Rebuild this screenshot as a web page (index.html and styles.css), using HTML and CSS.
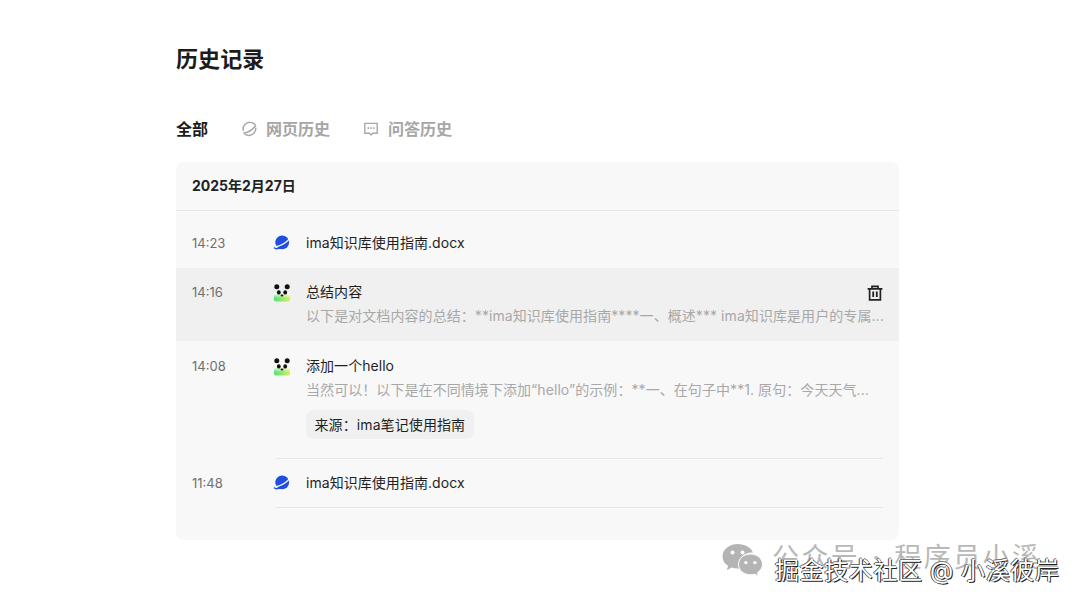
FILE: index.html
```html
<!DOCTYPE html>
<html lang="zh-CN">
<head>
<meta charset="utf-8">
<title>历史记录</title>
<link rel="stylesheet" href="styles.css">
</head>
<body>
<svg class="defs" width="0" height="0" aria-hidden="true">
  <defs>
    <linearGradient id="leaf" x1="0" y1="0" x2="1" y2="0">
      <stop offset="0" stop-color="#55e07a"/>
      <stop offset="1" stop-color="#d4f060"/>
    </linearGradient>
    <linearGradient id="fade" x1="0" y1="0" x2="0" y2="1">
      <stop offset="0" stop-color="#fff" stop-opacity="1"/>
      <stop offset="1" stop-color="#fff" stop-opacity="0"/>
    </linearGradient>
  </defs>
  <symbol id="planet" viewBox="0 0 16 16">
    <circle cx="8.200" cy="7.400" r="6.900" fill="#1f4fe0"/>
    <path d="M0.600 11.800C5 11.600 11.500 8.200 15.800 3.800" fill="none" stroke="#f8f8f8" stroke-width="1.400"/>
    <path d="M0.400 12.200C0 14.600 6 14 10 11.600" fill="none" stroke="#1f4fe0" stroke-width="1.300"/>
  </symbol>
  <symbol id="panda" viewBox="0 0 18 18">
    <rect x="1" y="9" width="16" height="8.500" rx="2" fill="url(#leaf)"/>
    <rect x="1" y="9" width="16" height="5" fill="url(#fade)"/>
    <circle cx="3.800" cy="2.800" r="2.500" fill="#111"/>
    <circle cx="14.200" cy="2.800" r="2.500" fill="#111"/>
    <ellipse cx="5.800" cy="8.400" rx="1.900" ry="2.200" fill="#111"/>
    <ellipse cx="12.200" cy="8.400" rx="1.900" ry="2.200" fill="#111"/>
    <ellipse cx="9" cy="11.400" rx="1.400" ry="1" fill="#111"/>
  </symbol>
</svg>

<main class="page">
  <h1 class="title">历史记录</h1>

  <nav class="tabs">
    <span class="tab tab-active">全部</span>
    <span class="tab">
      <svg class="tab-icon" viewBox="1 1 14 14" fill="none" stroke="#a8a8a8" stroke-width="1.300">
        <path d="M3 9.600C2 5.600 5.400 2 9 2.200C11.400 2.300 13 3.400 13.800 5"/>
        <path d="M13.900 6.800C14.400 10.600 11 14 7.400 13.700C6 13.600 4.800 13 4 12.200"/>
        <path d="M3 11.600C6.600 11.400 11 8.800 13.800 5.200"/>
      </svg>
      网页历史
    </span>
    <span class="tab">
      <svg class="tab-icon" viewBox="0 0 16 16" fill="none" stroke="#a8a8a8" stroke-width="1.400">
        <path d="M1.800 2.400H14.200V12.200H9.600L8 14L6.400 12.200H1.800Z" stroke-linejoin="miter"/>
        <path d="M4.500 7.200H6M7.250 7.200H8.750M10 7.200H11.500" stroke-width="1.800"/>
      </svg>
      问答历史
    </span>
  </nav>

  <section class="card">
    <header class="card-date">2025年2月27日</header>

    <article class="row row-first">
      <time class="time">14:23</time>
      <svg class="icon"><use href="#planet"/></svg>
      <div class="body">
        <div class="name">ima知识库使用指南.docx</div>
      </div>
    </article>

    <article class="row row-hover">
      <time class="time">14:16</time>
      <svg class="icon icon-panda"><use href="#panda"/></svg>
      <div class="body">
        <div class="name">总结内容</div>
        <p class="snippet">以下是对文档内容的总结：**ima知识库使用指南****一、概述*** ima知识库是用户的专属...</p>
      </div>
      <svg class="trash" viewBox="0 0 16 16" fill="none" stroke="#222" stroke-width="1.700">
        <path d="M0.600 3.800H15.400M5 3.600V1.400H11V3.600M2.600 3.800V14.800H13.400V3.800"/>
        <path d="M6.200 6.400V12M9.800 6.400V12" stroke-width="1.800"/>
      </svg>
    </article>

    <article class="row row-third">
      <time class="time">14:08</time>
      <svg class="icon icon-panda"><use href="#panda"/></svg>
      <div class="body body-ruled">
        <div class="name">添加一个hello</div>
        <p class="snippet">当然可以！以下是在不同情境下添加“hello”的示例：**一、在句子中**1. 原句：今天天气...</p>
        <span class="source">来源：ima笔记使用指南</span>
      </div>
    </article>

    <article class="row row-last">
      <time class="time">11:48</time>
      <svg class="icon"><use href="#planet"/></svg>
      <div class="body body-ruled">
        <div class="name">ima知识库使用指南.docx</div>
      </div>
    </article>
  </section>
</main>

<div class="watermark">
  <svg class="wechat" viewBox="0 0 40 34" fill="#b4b4b4">
    <path d="M15 0C6.700 0 0 5.600 0 12.400C0 16.400 2.200 19.600 5.600 21.900L4.200 26.200L9.200 23.600C11 24.100 13 24.500 15 24.500L16.600 24.400C16.200 23 15.900 21.800 15.900 20.600C15.900 13.900 22 8.600 29.400 8.600L30.400 8.600C28.800 3.600 22.600 0 15 0Z"/>
    <path d="M40 20.400C40 14.600 34.400 10 28 10C21.200 10 16 14.600 16 20.400C16 26.200 21.200 30.800 28 30.800C29.400 30.800 30.800 30.500 32.200 30.100L36 32.400L35 28.700C38 26.500 40 23.700 40 20.400Z" stroke="#fff" stroke-width="1"/>
    <circle cx="10" cy="8.400" r="2" fill="#fff"/>
    <circle cx="20" cy="8.400" r="2" fill="#fff"/>
    <circle cx="23.400" cy="18.600" r="1.700" fill="#fff"/>
    <circle cx="32.400" cy="18.600" r="1.700" fill="#fff"/>
  </svg>
  <span class="wm-gray">公众号 · 程序员小溪</span>
  <span class="wm-top">掘金技术社区 @ 小溪彼岸</span>
</div>
</body>
</html>
```

FILE: styles.css
```css
* {
  box-sizing: border-box;
}

html,
body {
  margin: 0;
  padding: 0;
  height: 605px;
  overflow: hidden;
  background: #fff;
}

body {
  position: relative;
  font-family: Inter, "Noto Sans CJK SC", sans-serif;
  color: #1f1f1f;
}

.defs {
  position: absolute;
}

.page {
  width: 723px;
  margin-left: 176px;
  padding-top: 45px;
}

.title {
  margin: 0;
  font-size: 22px;
  line-height: 28px;
  font-weight: 700;
  letter-spacing: 0.1px;
  color: #1c1c1c;
}

.tabs {
  display: flex;
  align-items: center;
  gap: 33px;
  margin-top: 44px;
  height: 24px;
}

.tab {
  display: flex;
  align-items: center;
  gap: 9px;
  font-size: 16px;
  line-height: 24px;
  font-weight: 700;
  color: #a6a6a6;
}

.tab-active {
  color: #1c1c1c;
}

.tab-icon {
  width: 16px;
  height: 16px;
}

.card {
  height: 378px;
  margin-top: 21px;
  border-radius: 8px;
  background: #f8f8f8;
}

.card-date {
  height: 49px;
  padding: 0 16px;
  border-bottom: 1px solid #e6e6e6;
  font-size: 14px;
  line-height: 47px;
  font-weight: 700;
  color: #222;
}

.row {
  display: flex;
  padding: 0 16px;
}

.row-first {
  height: 57px;
  padding-top: 22px;
}

.row-hover {
  height: 73px;
  padding-top: 14px;
  background: #f0f0f0;
}

.row-third {
  padding-top: 13px;
  margin-top: 2px;
}

.row-last {
  padding-top: 14px;
}

.time {
  flex: none;
  width: 82px;
  font-size: 13px;
  line-height: 20px;
  color: #6f6f6f;
}

.icon {
  flex: none;
  width: 16px;
  height: 16px;
  margin-top: 2px;
  margin-right: 16px;
}

.icon-panda {
  width: 18px;
  height: 18px;
  margin-top: 2px;
  margin-left: -1px;
  margin-right: 15px;
}

.body {
  flex: 1;
  min-width: 0;
}

.body-ruled {
  margin-left: -30px;
  padding-left: 30px;
  border-bottom: 1px solid #e8e8e8;
}

.row-third .body-ruled {
  height: 103px;
}

.row-last .body-ruled {
  height: 35px;
}

.name {
  font-size: 14px;
  line-height: 20px;
  letter-spacing: 0.05px;
  color: #1f1f1f;
}

.snippet {
  margin: 3px 0 0;
  font-size: 14px;
  line-height: 22px;
  letter-spacing: 0.07px;
  color: #a8a8a8;
  white-space: nowrap;
}

.source {
  display: block;
  width: fit-content;
  margin-top: 9px;
  padding: 0 8.500px;
  height: 29px;
  border-radius: 8px;
  background: #f0f0f0;
  font-size: 14px;
  line-height: 29px;
  letter-spacing: 0.1px;
  color: #1f1f1f;
}

.trash {
  position: absolute;
  width: 16px;
  height: 16px;
  left: 867px;
  top: 285px;
}

.watermark {
  position: absolute;
  left: 723px;
  top: 544px;
  width: 357px;
  height: 50px;
}

.wechat {
  position: absolute;
  left: -1px;
  top: 0;
  width: 41px;
  height: 34px;
}

.wm-gray {
  position: absolute;
  left: 49px;
  top: -2px;
  font-size: 27px;
  line-height: 32px;
  letter-spacing: 2.400px;
  word-spacing: 2px;
  white-space: nowrap;
  color: #b8b8b8;
}

.wm-top {
  position: absolute;
  left: 52px;
  top: 11px;
  font-size: 24px;
  line-height: 32px;
  letter-spacing: 0.6px;
  white-space: nowrap;
  color: #fff;
  text-shadow: 1px 1px 0 #222, -1px 0 0 #444, 0 -1px 0 #777;
}
```
